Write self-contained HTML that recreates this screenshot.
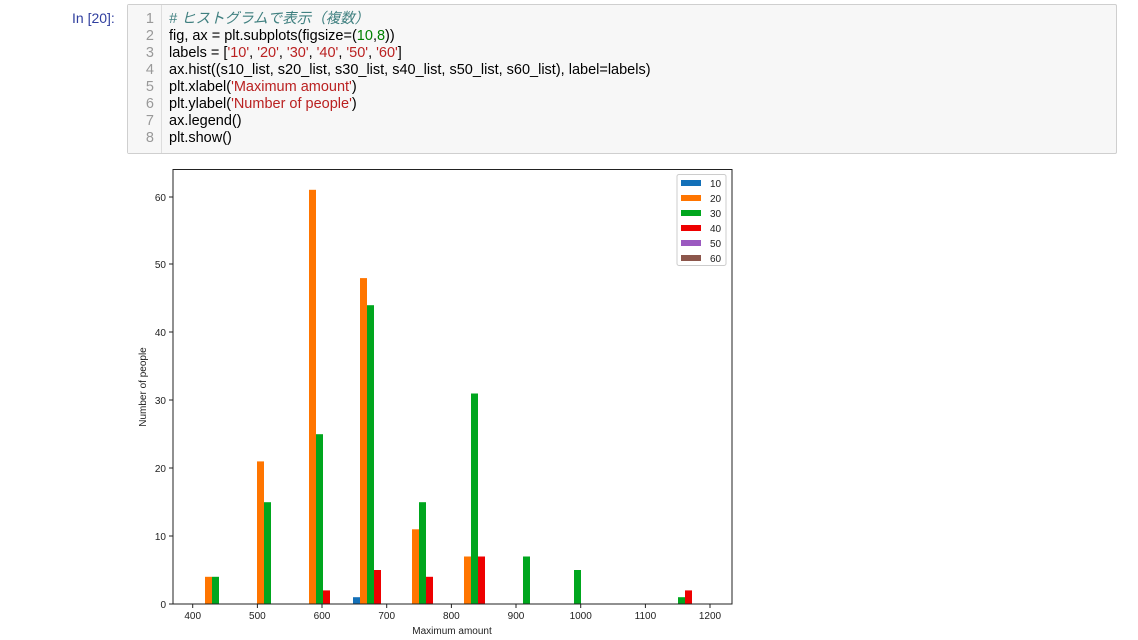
<!DOCTYPE html>
<html><head><meta charset="utf-8"><style>
body{margin:0;width:1138px;height:640px;background:#fff;overflow:hidden;position:relative;font-family:"Liberation Sans","Noto Sans CJK JP",sans-serif}
.prompt{position:absolute;left:72px;top:10px;color:#303f9f;font-size:14px}
.cell{position:absolute;left:127px;top:4px;width:988px;height:148px;background:#f7f7f7;border:1px solid #cfcfcf;border-radius:2px}
.gut{position:absolute;left:0;top:0;width:33px;height:148px;border-right:1px solid #ddd;background:#f7f7f7}
.ln{position:absolute;left:0;width:26px;text-align:right;color:#999;font-size:14.5px;line-height:17px}
.code{position:absolute;left:41px;top:6px;font-size:14.5px;line-height:17px;color:#000;white-space:pre}
.s{color:#ba2121}.n{color:#008000}.c{color:#408080;font-style:italic}
</style></head><body>
<div class="prompt">In [20]:</div>
<div class="cell"><div class="gut"></div>
<div class="ln" style="top:6px">1<br>2<br>3<br>4<br>5<br>6<br>7<br>8</div>
<div class="code"><span class="c"># ヒストグラムで表示（複数）</span>
fig, ax = plt.subplots(figsize=(<span class="n">10</span>,<span class="n">8</span>))
labels = [<span class="s">'10'</span>, <span class="s">'20'</span>, <span class="s">'30'</span>, <span class="s">'40'</span>, <span class="s">'50'</span>, <span class="s">'60'</span>]
ax.hist((s10_list, s20_list, s30_list, s40_list, s50_list, s60_list), label=labels)
plt.xlabel(<span class="s">'Maximum amount'</span>)
plt.ylabel(<span class="s">'Number of people'</span>)
ax.legend()
plt.show()</div></div>
<svg style="position:absolute;left:0;top:0" width="1138" height="640" font-family="Liberation Sans, DejaVu Sans, sans-serif" font-size="10" fill="#222">
<g id="bars">
<!-- y0=604, 6.79 per unit; blue_i=198+51.8i -->
<rect x="205" y="576.8" width="7" height="27.2" fill="#ff7500"/><rect x="212" y="576.8" width="7" height="27.2" fill="#00a61e"/>
<rect x="257" y="461.4" width="7" height="142.6" fill="#ff7500"/><rect x="264" y="502.2" width="7" height="101.8" fill="#00a61e"/>
<rect x="309" y="189.8" width="7" height="414.2" fill="#ff7500"/><rect x="316" y="434.2" width="7" height="169.8" fill="#00a61e"/><rect x="323" y="590.4" width="7" height="13.6" fill="#ee0000"/>
<rect x="353" y="597.2" width="7" height="6.8" fill="#1370b8"/><rect x="360" y="278.1" width="7" height="325.9" fill="#ff7500"/><rect x="367" y="305.2" width="7" height="298.8" fill="#00a61e"/><rect x="374" y="570" width="7" height="34" fill="#ee0000"/>
<rect x="412" y="529.3" width="7" height="74.7" fill="#ff7500"/><rect x="419" y="502.2" width="7" height="101.8" fill="#00a61e"/><rect x="426" y="576.8" width="7" height="27.2" fill="#ee0000"/>
<rect x="464" y="556.5" width="7" height="47.5" fill="#ff7500"/><rect x="471" y="393.5" width="7" height="210.5" fill="#00a61e"/><rect x="478" y="556.5" width="7" height="47.5" fill="#ee0000"/>
<rect x="523" y="556.5" width="7" height="47.5" fill="#00a61e"/>
<rect x="574" y="570" width="7" height="34" fill="#00a61e"/>
<rect x="678" y="597.2" width="7" height="6.8" fill="#00a61e"/><rect x="685" y="590.4" width="7" height="13.6" fill="#ee0000"/>
</g>
<rect x="173" y="169.5" width="559" height="434.5" fill="none" stroke="#222" stroke-width="1"/>
<g stroke="#222">
<line x1="169" x2="173" y1="604" y2="604"/><line x1="169" x2="173" y1="536" y2="536"/><line x1="169" x2="173" y1="468" y2="468"/><line x1="169" x2="173" y1="400" y2="400"/><line x1="169" x2="173" y1="332" y2="332"/><line x1="169" x2="173" y1="264" y2="264"/><line x1="169" x2="173" y1="197" y2="197"/>
<line y1="604" y2="608" x1="192.7" x2="192.7"/><line y1="604" y2="608" x1="257.4" x2="257.4"/><line y1="604" y2="608" x1="322" x2="322"/><line y1="604" y2="608" x1="386.7" x2="386.7"/><line y1="604" y2="608" x1="451.4" x2="451.4"/><line y1="604" y2="608" x1="516" x2="516"/><line y1="604" y2="608" x1="580.7" x2="580.7"/><line y1="604" y2="608" x1="645.4" x2="645.4"/><line y1="604" y2="608" x1="710" x2="710"/>
</g>
<g text-anchor="end"><text x="166" y="608">0</text><text x="166" y="540">10</text><text x="166" y="472">20</text><text x="166" y="404">30</text><text x="166" y="336">40</text><text x="166" y="268">50</text><text x="166" y="201">60</text></g>
<g text-anchor="middle"><text x="192.7" y="619">400</text><text x="257.4" y="619">500</text><text x="322" y="619">600</text><text x="386.7" y="619">700</text><text x="451.4" y="619">800</text><text x="516" y="619">900</text><text x="580.7" y="619">1000</text><text x="645.4" y="619">1100</text><text x="710" y="619">1200</text>
<text x="452" y="634">Maximum amount</text>
<text transform="translate(146,387) rotate(-90)">Number of people</text></g>
<rect x="677" y="174.5" width="49" height="91" rx="2" fill="#fff" stroke="#ccc"/>
<rect x="681" y="180" width="20" height="6" fill="#1370b8"/><text x="710" y="187">10</text>
<rect x="681" y="195" width="20" height="6" fill="#ff7500"/><text x="710" y="202">20</text>
<rect x="681" y="210" width="20" height="6" fill="#00a61e"/><text x="710" y="217">30</text>
<rect x="681" y="225" width="20" height="6" fill="#ee0000"/><text x="710" y="232">40</text>
<rect x="681" y="240" width="20" height="6" fill="#9b59c0"/><text x="710" y="247">50</text>
<rect x="681" y="255" width="20" height="6" fill="#8c564b"/><text x="710" y="262">60</text>
</svg>
</body></html>
